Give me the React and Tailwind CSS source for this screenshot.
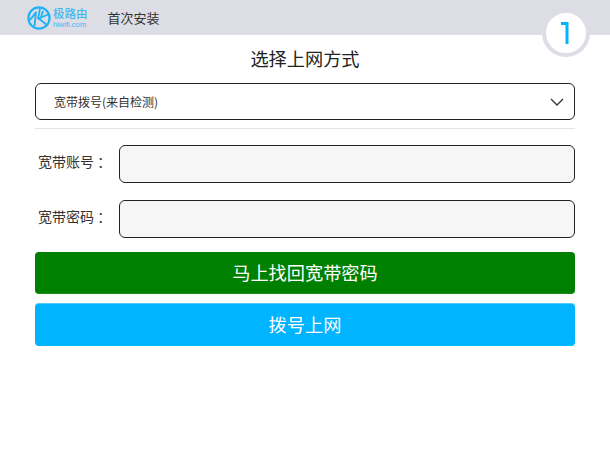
import React from "react";

function Logo() {
  return (
    <svg width="24" height="24" viewBox="0 0 24 24" fill="none" stroke="#1fb2f5" strokeWidth="1.9">
      <circle cx="12" cy="12" r="10.6" strokeWidth="2.2" />
      <path d="M2.5 14 C5 12 7 9 9 6 L7.5 20" />
      <path d="M13 2 C12.5 6 12 9 11 12 L20 19" />
      <path d="M16 5 L14 11" />
      <path d="M11 13 L22 8" />
    </svg>
  );
}

function Field({ label }) {
  return (
    <div className="flex items-center">
      <label className="w-[84px] pb-[6px] pl-[3px] text-[14px] text-[#333]">{label}</label>
      <input className="h-[38px] flex-1 rounded-md border border-[#222] bg-[#f6f6f6]" />
    </div>
  );
}

export default function App() {
  return (
    <div className="relative h-[450px] w-[610px] overflow-hidden bg-white font-['Noto_Sans_CJK_SC',sans-serif]">
      <header className="flex h-[35px] items-center bg-[#dddde5] pl-[27px]">
        <Logo />
        <div className="ml-[2px] flex flex-col text-[#3fb9f3]">
          <span className="text-[11.5px] font-medium leading-[13px]">极路由</span>
          <span className="font-['Liberation_Sans',sans-serif] text-[7.5px] leading-[9px]">hiwifi.com</span>
        </div>
        <span className="ml-[20px] text-[13px] text-[#333]">首次安装</span>
      </header>

      <div className="absolute left-[542px] top-[9px] flex h-12 w-12 items-center justify-center rounded-full border-4 border-[#dddde5] bg-white">
        <svg width="16" height="26" viewBox="0 0 16 26" fill="none" stroke="#00b4ff" strokeWidth="3">
          <path d="M3 3.5 H9 V24" />
        </svg>
      </div>

      <main className="px-[35px]">
        <h1 className="mt-[9px] text-center text-[18.2px] leading-[28px] text-[#222]">选择上网方式</h1>
        <div className="mt-[11px] flex h-[37px] items-center justify-between rounded-md border border-[#222] pl-[18px] pr-[10px]">
          <span className="text-[12px] text-[#333]">宽带拨号(来自检测)</span>
          <svg width="14" height="8" viewBox="0 0 14 8" fill="none" stroke="#333" strokeWidth="1.3">
            <path d="M1 1 L7 7 L13 1" />
          </svg>
        </div>
        <hr className="mt-2 border-[#e5e5e5]" />
        <div className="mt-4 flex flex-col gap-[17px]">
          <Field label="宽带账号 ：" />
          <Field label="宽带密码 ：" />
        </div>
        <button className="mt-[14px] flex h-[42px] w-full items-center justify-center rounded-[4px] border-b border-[#1a8c1a] bg-[#008000] text-[18.2px] text-white">
          马上找回宽带密码
        </button>
        <button className="mt-[9px] flex h-[43px] w-full items-center justify-center rounded-[4px] border-t border-[#4fc9ff] bg-[#00b4ff] text-[18.2px] text-white">
          拨号上网
        </button>
      </main>
    </div>
  );
}
